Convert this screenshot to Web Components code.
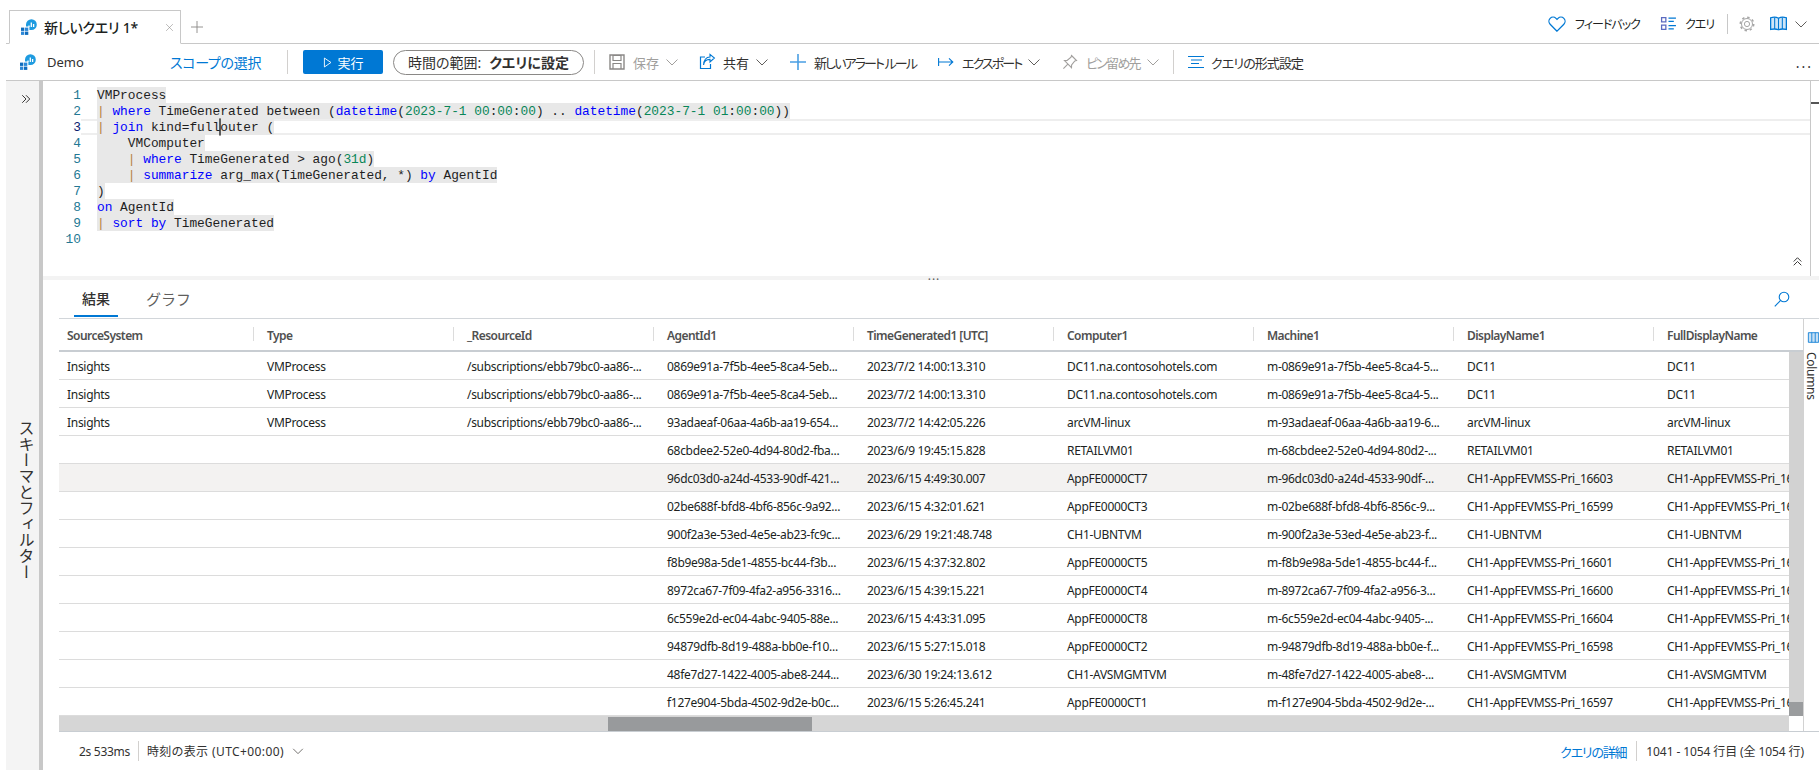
<!doctype html>
<html lang="ja">
<head>
<meta charset="utf-8">
<title>新しいクエリ 1</title>
<style>
  html, body { margin: 0; height: 100%; overflow: hidden; background: #fff; }
  body { font-family: "Noto Sans", "Noto Sans CJK JP", sans-serif; color: #323130; }
</style>
</head>
<body>
<la-workspace>
  <query-tabs slot="tabs"></query-tabs>
  <query-toolbar slot="toolbar"></query-toolbar>
  <schema-rail slot="rail"></schema-rail>
  <kql-editor slot="main"></kql-editor>
  <pane-splitter slot="main"></pane-splitter>
  <result-tabs slot="main"></result-tabs>
  <results-grid slot="main"></results-grid>
  <status-bar slot="main"></status-bar>
</la-workspace>

<script>
const FONT_UI = '"Noto Sans", "Noto Sans CJK JP", sans-serif';
const BLUE = '#0078d4';

// icon shapes, all on a 16 unit box
const ICONS = {
  logo: `<rect x="0" y="8.6" width="3.3" height="3.3" fill="#0f6cbd"/><rect x="4" y="8.6" width="3.3" height="3.3" fill="#2b88d8"/><rect x="0" y="12.6" width="3.3" height="3.3" fill="#2b88d8"/><rect x="4" y="12.6" width="3.3" height="3.3" fill="#0f6cbd"/><path d="M5 7.6V5.5A5.4 5.4 0 1 1 10.4 11H8.4V7.6z" fill="#1e9be0"/><path d="M8 8V6.4M10.3 8V3.6M12.6 8V5" stroke="#fff" stroke-width="1.3" fill="none"/>`,
  heart: `<path d="M8 14.4 1.9 8.2a3.7 3.7 0 0 1 0-5.2 3.7 3.7 0 0 1 5.2 0l.9.9.9-.9a3.7 3.7 0 0 1 5.2 0 3.7 3.7 0 0 1 0 5.2z" fill="none" stroke="${BLUE}" stroke-width="1.1"/>`,
  list: `<path d="M1.5 2.5h4v4h-4zM1.5 9.5h4v4h-4z" fill="none" stroke="#5c6bc0" stroke-width="1.2"/><path d="M8 3h7M8 6h5M8 10h7M8 13h5" stroke="${BLUE}" stroke-width="1.1"/>`,
  gear: `<circle cx="8" cy="8" r="2.6" fill="none" stroke="#a6a6a6"/><circle cx="8" cy="8" r="5.5" fill="none" stroke="#a6a6a6"/><circle cx="8" cy="8" r="6.7" fill="none" stroke="#a6a6a6" stroke-width="1.6" stroke-dasharray="2.4 2.86"/>`,
  book: `<path d="M.6 2.6c2.6-.8 5.2-.8 7.4.4 2.2-1.2 4.8-1.2 7.4-.4v11c-2.6-.6-5.2-.6-7.4.3-2.2-.9-4.8-.9-7.4-.3z" fill="#cfe6f8" stroke="${BLUE}" stroke-width="1.2"/><path d="M8 3v10.6M4.4 2.4v10.8M11.6 2.4v10.8" stroke="${BLUE}"/>`,
  chevron: `<path d="M2.5 5.500 8 11l5.500-5.500" fill="none" stroke="currentColor" stroke-width="1"/>`,
  save: `<path d="M1 1h14v14H1z" fill="none" stroke="#8a8886" stroke-width="1.4"/><path d="M4 1.5h8v5H4zM4 15v-5.5h8V15" fill="none" stroke="#8a8886" stroke-width="1.2"/>`,
  share: `<path d="M6 3H1.5v11.5h10V10" fill="none" stroke="${BLUE}" stroke-width="1.2"/><path d="M4.6 11c.4-3.8 3-5.6 6.4-5.6V8l4.4-4L11 .4V3C7 3 4.6 6.4 4.6 11z" fill="none" stroke="${BLUE}" stroke-width="1.1"/>`,
  plus: `<path d="M8 0v16M0 8h16" stroke="#4a9fe3" stroke-width="1.6"/>`,
  plusGray: `<path d="M8 0v16M0 8h16" stroke="#8a8886" stroke-width="1.2"/>`,
  exportTo: `<path d="M.6 4v8M1 8h13.6M11 4.4 14.8 8 11 11.6" fill="none" stroke="${BLUE}" stroke-width="1.1"/>`,
  pin: `<path d="M9.5 1.5 14.5 6.5 12.8 7 9.6 11l-.1 2.6-7-7 2.6-.1L9 3.2zM5.6 10.4 1.4 14.6" fill="none" stroke="#a19f9d" stroke-width="1.1"/>`,
  format: `<path d="M1 2.500h16M4 6h11M4 9.500h8M1 13.500h16" stroke="${BLUE}" stroke-width="1.2"/>`,
  search: `<circle cx="10" cy="6" r="4.8" fill="none" stroke="${BLUE}" stroke-width="1.1"/><path d="M6.6 9.4.8 15.4" stroke="${BLUE}" stroke-width="1.1"/>`,
  play: `<path d="M3.5 1.5 13 8l-9.5 6.5z" fill="none" stroke="#fff" stroke-width="1.3"/>`,
  close: `<path d="M2 2l12 12M14 2 2 14" stroke="#8a8886" stroke-width="1"/>`,
  doubleRight: `<path d="M3 3l5 5-5 5M8 3l5 5-5 5" fill="none" stroke="#323130" stroke-width="1.3"/>`,
  doubleUp: `<path d="M2.5 8 8 2.5 13.500 8M2.5 13.500 8 8l5.500 5.500" fill="none" stroke="#323130" stroke-width="1.4"/>`,
  columns: `<path d="M.5 1h15v14H.5zM5.500 1v14M10.500 1v14" fill="#c7e0f4" stroke="${BLUE}" stroke-width="1.2"/>`,
};

class AzIcon extends HTMLElement {
  connectedCallback() {
    const size = this.getAttribute('size') || 16;
    this.attachShadow({ mode: 'open' }).innerHTML = `
      <style>:host { display: inline-flex; flex: none; width: ${size}px; height: ${size}px; } svg { width: 100%; height: 100%; display: block; overflow: visible; }</style>
      <svg viewBox="0 0 16 16" aria-hidden="true">${ICONS[this.getAttribute('name')] || ''}</svg>`;
  }
}

class LaWorkspace extends HTMLElement {
  constructor() {
    super();
    this.attachShadow({ mode: 'open' }).innerHTML = `
      <style>
        :host { display: flex; flex-direction: column; height: 770px; padding-left: 6px; box-sizing: border-box; }
        .body { flex: 1; display: flex; min-height: 0; }
        .content { flex: 1; display: flex; flex-direction: column; min-width: 0; }
      </style>
      <slot name="tabs"></slot>
      <slot name="toolbar"></slot>
      <div class="body">
        <slot name="rail"></slot>
        <div class="content"><slot name="main"></slot></div>
      </div>`;
  }
}

class QueryTabs extends HTMLElement {
  constructor() {
    super();
    this.attachShadow({ mode: 'open' }).innerHTML = `
      <style>
        :host { display: flex; align-items: flex-end; height: 44px; box-sizing: border-box; border-bottom: 1px solid #c8c8c8; font: 14px ${FONT_UI}; color: #201f1e; font-feature-settings: "palt"; }
        .tab { display: flex; align-items: center; width: 172px; height: 34px; box-sizing: border-box; margin: 0 0 -1px 3px; padding: 0 0 0 11px; border: 1px solid #c8c8c8; border-bottom-color: #fff; background: #fff; }
        .name { margin-left: 7px; width: 121px; font-weight: 500; white-space: nowrap; letter-spacing: -.2px; }
        .add { margin: 0 0 10px 10px; }
        .tools { margin-left: auto; display: flex; align-items: center; height: 43px; font-size: 12px; padding-top: 4px; box-sizing: border-box; }
        .lbl { white-space: nowrap; letter-spacing: -1px; }
        .sep { width: 1px; height: 20px; background: #c8c8c8; }
        .chev { color: #605e5c; }
      </style>
      <div class="tab">
        <az-icon name="logo"></az-icon>
        <span class="name">新しいクエリ 1*</span>
        <az-icon name="close" size="9"></az-icon>
      </div>
      <az-icon class="add" name="plusGray" size="12"></az-icon>
      <div class="tools">
        <az-icon name="heart" size="18"></az-icon>
        <span class="lbl" style="margin-left:9px;width:62px">フィードバック</span>
        <az-icon name="list" size="17" style="margin-left:23px"></az-icon>
        <span class="lbl" style="margin-left:8px;width:27px">クエリ</span>
        <span class="sep" style="margin-left:15px"></span>
        <az-icon name="gear" size="16" style="margin-left:11px"></az-icon>
        <az-icon name="book" size="17" style="margin-left:15px"></az-icon>
        <az-icon class="chev" name="chevron" size="16" style="margin-left:6px"></az-icon>
        <span style="width:10px"></span>
      </div>`;
  }
}

// one icon + label + optional chevron command in the toolbar
class ToolItem extends HTMLElement {
  connectedCallback() {
    const off = this.hasAttribute('disabled');
    const chev = this.hasAttribute('chevron') ? `<az-icon class="chev" name="chevron" size="16"></az-icon>` : '';
    this.attachShadow({ mode: 'open' }).innerHTML = `
      <style>
        :host { display: flex; align-items: center; flex: none; gap: 8px; width: ${this.getAttribute('width')}px; color: ${off ? '#a19f9d' : '#323130'}; white-space: nowrap; }
        span { letter-spacing: ${this.getAttribute('track') || 0}px; }
        .chev { color: ${off ? '#a19f9d' : '#605e5c'}; margin-left: -3px; }
      </style>
      <az-icon name="${this.getAttribute('icon')}" size="${this.getAttribute('size') || 16}"></az-icon>
      <span><slot></slot></span>${chev}`;
  }
}

class QueryToolbar extends HTMLElement {
  constructor() {
    super();
    this.attachShadow({ mode: 'open' }).innerHTML = `
      <style>
        :host { display: flex; align-items: center; height: 37px; box-sizing: border-box; padding: 0 0 0 14px; border-bottom: 1px solid #c8c8c8; font: 13px ${FONT_UI}; color: #323130; font-feature-settings: "palt"; white-space: nowrap; }
        .scope { display: flex; align-items: center; gap: 11px; width: 150px; flex: none; }
        a { color: ${BLUE}; width: 117px; flex: none; font-size: 14px; letter-spacing: -.3px; }
        .sep { width: 1px; height: 24px; background: #d2d0ce; flex: none; }
        .run { display: flex; align-items: center; justify-content: center; gap: 4px; flex: none; width: 80px; height: 24px; margin-left: 15px; background: ${BLUE}; color: #fff; border-radius: 2px; font-size: 13px; }
        .pill { display: flex; align-items: center; justify-content: center; gap: 8px; flex: none; width: 191px; height: 25px; box-sizing: border-box; margin: 0 10px; border: 1px solid #8a8886; border-radius: 13px; font-size: 14px; }
        b { font-weight: 600; }
        .more { margin: 2px 6px 0 auto; letter-spacing: 2px; color: #323130; font-size: 14px; line-height: 1; }
      </style>
      <div class="scope"><az-icon name="logo"></az-icon><span>Demo</span></div>
      <a>スコープの選択</a>
      <span class="sep"></span>
      <div class="run"><az-icon name="play" size="11"></az-icon>実行</div>
      <div class="pill"><span>時間の範囲:</span><b>クエリに設定</b></div>
      <span class="sep"></span>
      <tool-item icon="save" width="90" disabled chevron style="margin-left:14px">保存</tool-item>
      <tool-item icon="share" width="91" chevron>共有</tool-item>
      <tool-item icon="plus" width="148" track="-1.9">新しいアラート ルール</tool-item>
      <tool-item icon="exportTo" width="124" chevron track="-1.9">エクスポート</tool-item>
      <tool-item icon="pin" width="111" disabled chevron track="-1.8">ピン留め先</tool-item>
      <span class="sep"></span>
      <tool-item icon="format" width="130" track="-.9" style="margin-left:13px">クエリの形式設定</tool-item>
      <span class="more">...</span>`;
  }
}

class SchemaRail extends HTMLElement {
  constructor() {
    super();
    this.attachShadow({ mode: 'open' }).innerHTML = `
      <style>
        :host { display: flex; flex-direction: column; align-items: center; flex: none; width: 27px; padding-left: 6px; background: #f4f4f4; border-right: 4px solid #c8c8c8; font: 16px ${FONT_UI}; color: #323130; }
        .open { margin-top: 12px; }
        .label { margin-top: 315px; writing-mode: vertical-rl; white-space: nowrap; font-feature-settings: "palt"; }
      </style>
      <az-icon class="open" name="doubleRight" size="12"></az-icon>
      <span class="label">スキーマとフィルター</span>`;
  }
}

// tiny KQL colouring: k keyword, n number, p pipe, anything else is plain
const KQL = [
  [['', 'VMProcess']],
  [['p', '|'], ['', ' '], ['k', 'where'], ['', ' TimeGenerated between ('], ['k', 'datetime'], ['', '('], ['n', '2023-7-1 00'], ['', ':'], ['n', '00'], ['', ':'], ['n', '00'], ['', ') .. '], ['k', 'datetime'], ['', '('], ['n', '2023-7-1 01'], ['', ':'], ['n', '00'], ['', ':'], ['n', '00'], ['', '))']],
  [['p', '|'], ['', ' '], ['k', 'join'], ['', ' kind=full'], ['c', ''], ['', 'outer (']],
  [['', '    VMComputer']],
  [['', '    '], ['p', '|'], ['', ' '], ['k', 'where'], ['', ' TimeGenerated > ago('], ['n', '31d'], ['', ')']],
  [['', '    '], ['p', '|'], ['', ' '], ['k', 'summarize'], ['', ' arg_max(TimeGenerated, *) '], ['k', 'by'], ['', ' AgentId']],
  [['', ')']],
  [['k', 'on'], ['', ' AgentId']],
  [['p', '|'], ['', ' '], ['k', 'sort by'], ['', ' TimeGenerated']],
  [],
];

class KqlEditor extends HTMLElement {
  constructor() {
    super();
    const lines = KQL.map((parts, i) => {
      const code = parts.map(([cls, txt]) => cls ? `<span class="${cls}">${txt}</span>` : txt).join('');
      const sel = parts.length ? `<span class="sel">${code}</span>` : '';
      return `<div class="line${i === 2 ? ' cur' : ''}"><span class="no">${i + 1}</span>${sel}</div>`;
    }).join('');
    this.attachShadow({ mode: 'open' }).innerHTML = `
      <style>
        :host { display: flex; flex: none; height: 195px; font: 12.84px/18px "Liberation Mono", monospace; color: #1e1e1e; position: relative; }
        .code { flex: 1; min-width: 0; border-right: 1px solid #c8c8c8; padding-top: 6px; }
        .line { display: flex; height: 16px; white-space: pre; }
        .cur { background: linear-gradient(#eee 0 2px, transparent 2px 14px, #eee 14px); }
        .no { flex: none; width: 38px; margin-right: 16px; text-align: right; color: #237893; }
        .cur .no { color: #0b216f; background: #fff; }
        .sel { background: #e8e8e8; height: 16px; }
        .k { color: #0000ff; }
        .n { color: #098658; }
        .p { color: #b5803f; }
        .c { display: inline-block; width: 0; height: 16px; box-shadow: 0 0 0 .6px #000; vertical-align: top; }
        .ruler { flex: none; width: 8px; }
        .ruler i { display: block; width: 8px; height: 2px; margin-top: 21px; background: #555; }
        .collapse { position: absolute; right: 16px; bottom: 9px; }
      </style>
      <div class="code">${lines}</div>
      <div class="ruler"><i></i></div>
      <az-icon class="collapse" name="doubleUp" size="11"></az-icon>`;
  }
}

class PaneSplitter extends HTMLElement {
  constructor() {
    super();
    this.attachShadow({ mode: 'open' }).innerHTML = `
      <style>
        :host { display: flex; justify-content: center; flex: none; height: 4px; background: #f3f3f3; }
        span { font: 12px/1 ${FONT_UI}; letter-spacing: 1px; color: #605e5c; margin: -6px 0 0 6px; height: 4px; }
      </style>
      <span>...</span>`;
  }
}

class ResultTabs extends HTMLElement {
  constructor() {
    super();
    this.attachShadow({ mode: 'open' }).innerHTML = `
      <style>
        :host { display: flex; align-items: stretch; flex: none; height: 38px; padding-left: 31px; font: 14px ${FONT_UI}; color: #605e5c; }
        .tab { display: flex; align-items: center; box-sizing: border-box; height: 37px; }
        .on { width: 44px; justify-content: center; color: #323130; border-bottom: 2px solid ${BLUE}; font-weight: 500; }
        .second { margin-left: 28px; font-size: 15px; }
        az-icon { margin: 11px 29px 0 auto; }
      </style>
      <div class="tab on">結果</div>
      <div class="tab second">グラフ</div>
      <az-icon name="search" size="16"></az-icon>`;
  }
}

const COLUMNS = ['SourceSystem', 'Type', '_ResourceId', 'AgentId1', 'TimeGenerated1 [UTC]', 'Computer1', 'Machine1', 'DisplayName1', 'FullDisplayName'];
const RES = ['Insights', 'VMProcess', '/subscriptions/ebb79bc0-aa86-...'];
const NONE = ['', '', ''];
const PRI = 'CH1-AppFEVMSS-Pri_';
const ROWS = [
  [...RES, '0869e91a-7f5b-4ee5-8ca4-5eb...', '2023/7/2 14:00:13.310', 'DC11.na.contosohotels.com', 'm-0869e91a-7f5b-4ee5-8ca4-5...', 'DC11', 'DC11'],
  [...RES, '0869e91a-7f5b-4ee5-8ca4-5eb...', '2023/7/2 14:00:13.310', 'DC11.na.contosohotels.com', 'm-0869e91a-7f5b-4ee5-8ca4-5...', 'DC11', 'DC11'],
  [...RES, '93adaeaf-06aa-4a6b-aa19-654...', '2023/7/2 14:42:05.226', 'arcVM-linux', 'm-93adaeaf-06aa-4a6b-aa19-6...', 'arcVM-linux', 'arcVM-linux'],
  [...NONE, '68cbdee2-52e0-4d94-80d2-fba...', '2023/6/9 19:45:15.828', 'RETAILVM01', 'm-68cbdee2-52e0-4d94-80d2-...', 'RETAILVM01', 'RETAILVM01'],
  [...NONE, '96dc03d0-a24d-4533-90df-421...', '2023/6/15 4:49:30.007', 'AppFE0000CT7', 'm-96dc03d0-a24d-4533-90df-...', PRI + '16603', PRI + '16603'],
  [...NONE, '02be688f-bfd8-4bf6-856c-9a92...', '2023/6/15 4:32:01.621', 'AppFE0000CT3', 'm-02be688f-bfd8-4bf6-856c-9...', PRI + '16599', PRI + '16599'],
  [...NONE, '900f2a3e-53ed-4e5e-ab23-fc9c...', '2023/6/29 19:21:48.748', 'CH1-UBNTVM', 'm-900f2a3e-53ed-4e5e-ab23-f...', 'CH1-UBNTVM', 'CH1-UBNTVM'],
  [...NONE, 'f8b9e98a-5de1-4855-bc44-f3b...', '2023/6/15 4:37:32.802', 'AppFE0000CT5', 'm-f8b9e98a-5de1-4855-bc44-f...', PRI + '16601', PRI + '16601'],
  [...NONE, '8972ca67-7f09-4fa2-a956-3316...', '2023/6/15 4:39:15.221', 'AppFE0000CT4', 'm-8972ca67-7f09-4fa2-a956-3...', PRI + '16600', PRI + '16600'],
  [...NONE, '6c559e2d-ec04-4abc-9405-88e...', '2023/6/15 4:43:31.095', 'AppFE0000CT8', 'm-6c559e2d-ec04-4abc-9405-...', PRI + '16604', PRI + '16604'],
  [...NONE, '94879dfb-8d19-488a-bb0e-f10...', '2023/6/15 5:27:15.018', 'AppFE0000CT2', 'm-94879dfb-8d19-488a-bb0e-f...', PRI + '16598', PRI + '16598'],
  [...NONE, '48fe7d27-1422-4005-abe8-244...', '2023/6/30 19:24:13.612', 'CH1-AVSMGMTVM', 'm-48fe7d27-1422-4005-abe8-...', 'CH1-AVSMGMTVM', 'CH1-AVSMGMTVM'],
  [...NONE, 'f127e904-5bda-4502-9d2e-b0c...', '2023/6/15 5:26:45.241', 'AppFE0000CT1', 'm-f127e904-5bda-4502-9d2e-...', PRI + '16597', PRI + '16597'],
];

class ResultsGrid extends HTMLElement {
  constructor() {
    super();
    const head = COLUMNS.map((c, i) => `<div class="th${i === COLUMNS.length - 1 ? ' last' : ''}">${c}</div>`).join('');
    const rows = ROWS.map((r, i) => `<div class="row${i === 4 ? ' hover' : ''}">${r.map(v => `<div class="td">${v}</div>`).join('')}</div>`).join('');
    this.attachShadow({ mode: 'open' }).innerHTML = `
      <style>
        :host { display: flex; flex: none; height: 414px; margin-left: 16px; box-sizing: border-box; border-top: 1px solid #d2d6da; border-bottom: 1px solid #c8cdd2; font: 12px ${FONT_UI}; color: #201f1e; }
        .main { flex: 1; min-width: 0; display: flex; flex-direction: column; }
        .head { flex: none; display: grid; grid-template-columns: repeat(9, 200px); height: 33px; box-sizing: border-box; border-bottom: 2px solid #c8cdd2; overflow: hidden; }
        .th { position: relative; display: flex; align-items: center; padding: 1px 0 0 8px; font-weight: 600; color: #505050; white-space: nowrap; letter-spacing: -.55px; }
        .th:not(.last)::after { content: ""; position: absolute; right: 5px; top: 8px; bottom: 9px; width: 1px; background: #dcdcdc; }
        .middle { flex: 1; min-height: 0; display: flex; }
        .viewport { flex: 1; min-width: 0; overflow: hidden; }
        .row { display: grid; grid-template-columns: repeat(9, 200px); height: 28px; box-sizing: border-box; border-bottom: 1px solid #dcdcdc; }
        .hover { background: #f3f2f1; }
        .td { display: flex; align-items: center; padding: 2px 0 0 8px; white-space: nowrap; overflow: hidden; letter-spacing: -.3px; }
        .vbar { flex: none; width: 14px; display: flex; flex-direction: column; background: #d2d2d2; }
        .vbar i { display: block; height: 14px; margin-top: auto; background: #9a9c9e; }
        .hbar { flex: none; height: 15px; display: flex; }
        .track { flex: 1; background: #d6d6d6; padding: 1px 0 0 549px; }
        .track i { display: block; width: 204px; height: 14px; background: #989a9c; }
        .corner { width: 14px; background: #fff; }
        .cols { flex: none; width: 15px; border-left: 1px solid #d2d2d2; overflow: hidden; color: #323130; }
        .cols az-icon { margin: 13px 0 0 4px; }
        .cols span { display: block; writing-mode: vertical-rl; margin: 5px 0 0 0; line-height: 16px; width: 15px; letter-spacing: -.3px; }
      </style>
      <div class="main">
        <div class="head">${head}</div>
        <div class="middle">
          <div class="viewport">${rows}</div>
          <div class="vbar"><i></i></div>
        </div>
        <div class="hbar"><div class="track"><i></i></div><div class="corner"></div></div>
      </div>
      <div class="cols"><az-icon name="columns" size="11"></az-icon><span>Columns</span></div>`;
  }
}

class StatusBar extends HTMLElement {
  constructor() {
    super();
    this.attachShadow({ mode: 'open' }).innerHTML = `
      <style>
        :host { display: flex; align-items: center; flex: 1; padding: 0 15px 0 36px; font: 12px ${FONT_UI}; color: #323130; font-feature-settings: "palt"; white-space: nowrap; }
        .sep { width: 1px; height: 20px; background: #d2d0ce; margin: 0 8px; }
        .tight { letter-spacing: -.3px; }
        .time { letter-spacing: .4px; }
        a { color: ${BLUE}; margin-left: auto; font-size: 13px; letter-spacing: -1.2px; }
        a + .sep { margin: 0 9px 0 10px; }
        az-icon { margin-left: 7px; color: #605e5c; }
      </style>
      <span class="tight">2s 533ms</span><span class="sep"></span>
      <span class="time">時刻の表示 (UTC+00:00)</span><az-icon name="chevron" size="14"></az-icon>
      <a>クエリの詳細</a><span class="sep"></span>
      <span style="letter-spacing:-.1px">1041 - 1054 行目 (全 1054 行)</span>`;
  }
}

customElements.define('az-icon', AzIcon);
customElements.define('tool-item', ToolItem);
customElements.define('la-workspace', LaWorkspace);
customElements.define('query-tabs', QueryTabs);
customElements.define('query-toolbar', QueryToolbar);
customElements.define('schema-rail', SchemaRail);
customElements.define('kql-editor', KqlEditor);
customElements.define('pane-splitter', PaneSplitter);
customElements.define('result-tabs', ResultTabs);
customElements.define('results-grid', ResultsGrid);
customElements.define('status-bar', StatusBar);
</script>
</body>
</html>
